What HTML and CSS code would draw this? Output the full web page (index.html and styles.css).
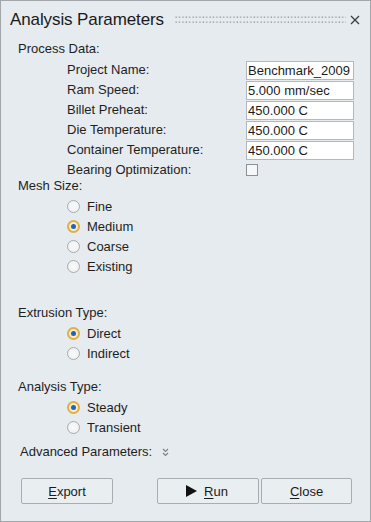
FILE: index.html
```html
<!DOCTYPE html>
<html>
<head>
<meta charset="utf-8">
<link rel="stylesheet" href="styles.css">
</head>
<body>
<div class="panel">
  <div class="titlebar">
    <span class="title">Analysis Parameters</span>
    <svg class="grip" width="171" height="8" viewBox="0 0 171 8">
      <defs>
        <pattern id="dots" x="0" y="0" width="3.4" height="5" patternUnits="userSpaceOnUse">
          <rect x="0.5" y="0.5" width="1.3" height="1.3" fill="#8e9398"/>
        </pattern>
      </defs>
      <rect width="171" height="8" fill="url(#dots)"/>
    </svg>
    <svg class="close" width="10" height="10" viewBox="0 0 10 10">
      <path d="M1 1 L9 9 M9 1 L1 9" stroke="#3c3f42" stroke-width="1.3" fill="none"/>
    </svg>
  </div>

  <div class="section-label first">Process Data:</div>
  <div class="form">
    <div class="row"><span class="lbl">Project Name:</span><span class="input">Benchmark_2009</span></div>
    <div class="row"><span class="lbl">Ram Speed:</span><span class="input">5.000 mm/sec</span></div>
    <div class="row"><span class="lbl">Billet Preheat:</span><span class="input">450.000 C</span></div>
    <div class="row"><span class="lbl">Die Temperature:</span><span class="input">450.000 C</span></div>
    <div class="row"><span class="lbl">Container Temperature:</span><span class="input">450.000 C</span></div>
    <div class="row short"><span class="lbl">Bearing Optimization:</span><span class="checkbox"></span></div>
  </div>

  <div class="section-label">Mesh Size:</div>
  <div class="options">
    <div class="opt"><span class="radio"></span>Fine</div>
    <div class="opt"><span class="radio on"></span>Medium</div>
    <div class="opt"><span class="radio"></span>Coarse</div>
    <div class="opt"><span class="radio"></span>Existing</div>
  </div>

  <div class="section-label gap-lg">Extrusion Type:</div>
  <div class="options">
    <div class="opt"><span class="radio on"></span>Direct</div>
    <div class="opt"><span class="radio"></span>Indirect</div>
  </div>

  <div class="section-label gap-md">Analysis Type:</div>
  <div class="options">
    <div class="opt"><span class="radio on"></span>Steady</div>
    <div class="opt"><span class="radio"></span>Transient</div>
  </div>

  <div class="advanced">Advanced Parameters:
    <svg class="chev" width="7" height="9" viewBox="0 0 7 9">
      <path d="M1 1 L3.5 3.5 L6 1 M1 5 L3.5 7.5 L6 5" stroke="#7d8186" stroke-width="1.1" fill="none"/>
    </svg>
  </div>

  <div class="buttons">
    <div class="btn export"><span><u>E</u>xport</span></div>
    <div class="right">
      <div class="btn run">
        <svg class="tri" width="11" height="12" viewBox="0 0 11 12"><polygon points="0,0 11,6 0,12" fill="#111"/></svg>
        <span><u>R</u>un</span>
      </div>
      <div class="btn closebtn"><span><u>C</u>lose</span></div>
    </div>
  </div>
</div>
</body>
</html>
```

FILE: styles.css
```css
html, body {
  margin: 0;
  padding: 0;
  background: #e5ebef;
}
.panel {
  box-sizing: border-box;
  width: 371px;
  height: 522px;
  border: 1px solid #a2a7ac;
  background: #e5ebef;
  font-family: "Liberation Sans", Arial, sans-serif;
  font-size: 13px;
  color: #1e1e1e;
  display: flex;
  flex-direction: column;
}
.titlebar {
  height: 37px;
  display: flex;
  align-items: center;
  padding-left: 9px;
}
.title {
  font-size: 17px;
  color: #1a1a1a;
  letter-spacing: -0.1px;
}
.grip {
  margin-left: 11px;
  margin-top: 1px;
}
.close {
  margin-left: 4px;
}
.section-label {
  height: 20px;
  line-height: 20px;
  padding-left: 17px;
}
.section-label.first {
  height: 22px;
  line-height: 22px;
}
.section-label.gap-lg { margin-top: 27px; }
.section-label.gap-md { margin-top: 14px; }
.form {
  display: flex;
  flex-direction: column;
  padding-left: 66px;
}
.row {
  height: 20px;
  display: grid;
  grid-template-columns: 179px 108px;
  align-items: center;
}
.row.short { height: 16px; }
.lbl { line-height: 20px; }
.input {
  box-sizing: border-box;
  height: 19px;
  border: 1px solid #b3b8bd;
  background: #ffffff;
  line-height: 17px;
  padding-left: 1px;
  white-space: nowrap;
  overflow: hidden;
  color: #1a1a1a;
}
.checkbox {
  box-sizing: border-box;
  width: 12px;
  height: 12px;
  border: 1px solid #8c9094;
  background: #f6f7f8;
}
.options {
  display: flex;
  flex-direction: column;
  padding-left: 66px;
}
.opt {
  height: 20px;
  display: flex;
  align-items: center;
  gap: 7px;
}
.radio {
  box-sizing: border-box;
  width: 13px;
  height: 13px;
  border-radius: 50%;
  border: 1px solid #a9abad;
  background: radial-gradient(circle, #fbfbfb 0, #f1f2f3 60%, #e6e7e8 100%);
  display: flex;
  align-items: center;
  justify-content: center;
}
.radio.on {
  border: 2px solid #e2ae45;
  background: #fbeec6;
}
.radio.on::after {
  content: "";
  width: 5px;
  height: 5px;
  border-radius: 50%;
  background: #1f63c9;
}
.advanced {
  margin-top: 5px;
  height: 20px;
  line-height: 20px;
  padding-left: 19px;
  display: flex;
  align-items: center;
}
.chev {
  margin-left: 10px;
}
.buttons {
  margin-top: 16px;
  display: flex;
  justify-content: space-between;
  padding-left: 20px;
  padding-right: 18px;
}
.right {
  display: flex;
  gap: 2px;
}
.btn {
  box-sizing: border-box;
  height: 26px;
  border: 1px solid #a9adb1;
  border-radius: 2px;
  background: #e9eef1;
  display: flex;
  align-items: center;
  justify-content: center;
  color: #1a1a1a;
}
.btn u { text-decoration-thickness: 1px; text-underline-offset: 2px; }
.export { width: 92px; }
.run { width: 102px; gap: 7px; }
.closebtn { width: 91px; }
.tri { margin-left: -2px; }
```
